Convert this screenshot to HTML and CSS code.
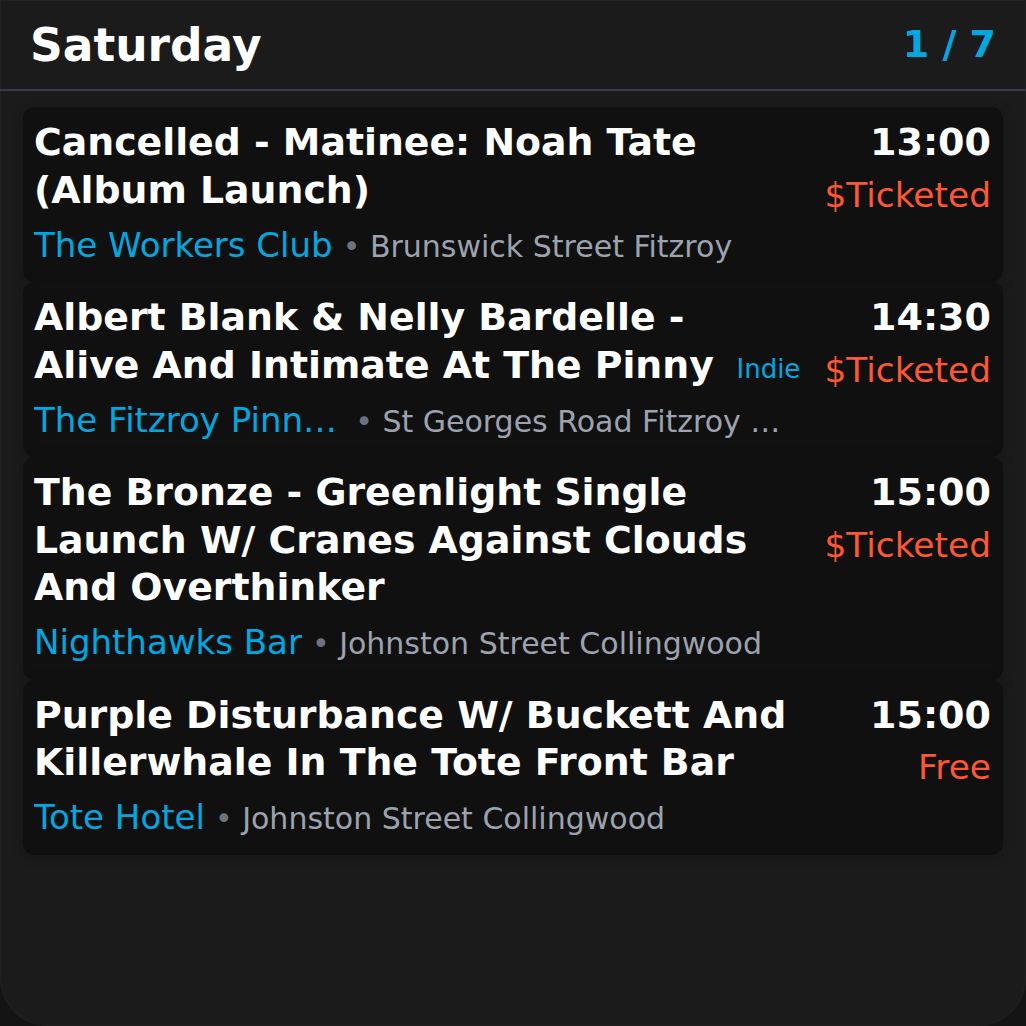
FILE: index.html
```html
<!DOCTYPE html>
<html lang="en">
<head>
<meta charset="utf-8">
<title>Saturday</title>
<link rel="stylesheet" href="styles.css">
</head>
<body>
<div class="screen">
  <header class="header">
    <h1 class="day">Saturday</h1>
    <div class="pager">1 / 7</div>
  </header>
  <main class="list">
    <article class="card">
      <div class="info">
        <div class="title-row">
          <h2 class="title">Cancelled - Matinee: Noah Tate (Album Launch)</h2>
        </div>
        <div class="place">
          <span class="venue">The Workers Club</span>
          <span class="addr"><span class="dot">•</span> Brunswick Street Fitzroy</span>
        </div>
      </div>
      <div class="meta">
        <div class="time">13:00</div>
        <div class="price">$Ticketed</div>
      </div>
    </article>
    <article class="card">
      <div class="info">
        <div class="title-row">
          <h2 class="title">Albert Blank &amp; Nelly Bardelle - Alive And Intimate At The Pinny</h2>
          <span class="genre">Indie</span>
        </div>
        <div class="place">
          <span class="venue">The Fitzroy Pinnacle</span>
          <span class="addr"><span class="dot">•</span> St Georges Road Fitzroy North</span>
        </div>
      </div>
      <div class="meta">
        <div class="time">14:30</div>
        <div class="price">$Ticketed</div>
      </div>
    </article>
    <article class="card">
      <div class="info">
        <div class="title-row">
          <h2 class="title">The Bronze - Greenlight Single Launch W/ Cranes Against Clouds And Overthinker</h2>
        </div>
        <div class="place">
          <span class="venue">Nighthawks Bar</span>
          <span class="addr"><span class="dot">•</span> Johnston Street Collingwood</span>
        </div>
      </div>
      <div class="meta">
        <div class="time">15:00</div>
        <div class="price">$Ticketed</div>
      </div>
    </article>
    <article class="card">
      <div class="info">
        <div class="title-row">
          <h2 class="title">Purple Disturbance W/ Buckett And Killerwhale In The Tote Front Bar</h2>
        </div>
        <div class="place">
          <span class="venue">Tote Hotel</span>
          <span class="addr"><span class="dot">•</span> Johnston Street Collingwood</span>
        </div>
      </div>
      <div class="meta">
        <div class="time">15:00</div>
        <div class="price">Free</div>
      </div>
    </article>
  </main>
</div>
</body>
</html>
```
FILE: styles.css
```css
* { box-sizing: border-box; }

html, body {
  margin: 0;
  padding: 0;
  background: #141414;
}

body {
  font-family: "DejaVu Sans", "Liberation Sans", sans-serif;
  color: #ffffff;
}

.screen {
  width: 1026px;
  height: 1026px;
  background: #1b1b1b;
  border-radius: 0 0 48px 48px;
  overflow: hidden;
  box-shadow: inset 0 0 0 1px rgba(255, 255, 255, 0.03);
}

.header {
  height: 91px;
  display: flex;
  justify-content: space-between;
  align-items: flex-start;
  padding: 20px 30px 0 30px;
  border-bottom: 2px solid #363b45;
}

.day {
  margin: 0;
  font-size: 45.5px;
  font-weight: 700;
  line-height: 1.164;
  color: #ffffff;
}

.pager {
  margin-top: 2px;
  font-size: 38px;
  font-weight: 700;
  line-height: 1.164;
  color: #00a8e0;
}

.list {
  display: flex;
  flex-direction: column;
  padding: 16px 23px 0;
}

.card {
  display: flex;
  gap: 24px;
  padding: 12px 12px 12px 11px;
  background: #101010;
  border-radius: 12px;
  box-shadow: 0 2px 14px rgba(0, 0, 0, 0.18);
}

.info {
  flex: 1;
  min-width: 0;
}

.title-row {
  display: flex;
  align-items: last baseline;
  gap: 16px;
}

.title {
  margin: 0;
  font-size: 37.8px;
  font-weight: 700;
  line-height: 47.5px;
  color: #ffffff;
}

.genre {
  flex-shrink: 0;
  font-size: 26px;
  color: #00a8e0;
}

.place {
  display: flex;
  align-items: baseline;
  margin-top: 7.5px;
  line-height: 47.5px;
  white-space: nowrap;
}

.venue {
  max-width: 40.6%;
  overflow: hidden;
  text-overflow: ellipsis;
  font-size: 34px;
  color: #00a8e0;
}

.addr {
  flex: 1;
  min-width: 0;
  overflow: hidden;
  text-overflow: ellipsis;
  margin-left: 10px;
  font-size: 30px;
  color: #9ca3af;
}

.dot {
  color: #6b7280;
}

.meta {
  flex-shrink: 0;
  text-align: right;
}

.time {
  font-size: 38px;
  font-weight: 700;
  line-height: 47.5px;
  color: #ffffff;
}

.price {
  margin-top: 6px;
  font-size: 34.4px;
  line-height: 1.3;
  color: #ff5733;
}
```
